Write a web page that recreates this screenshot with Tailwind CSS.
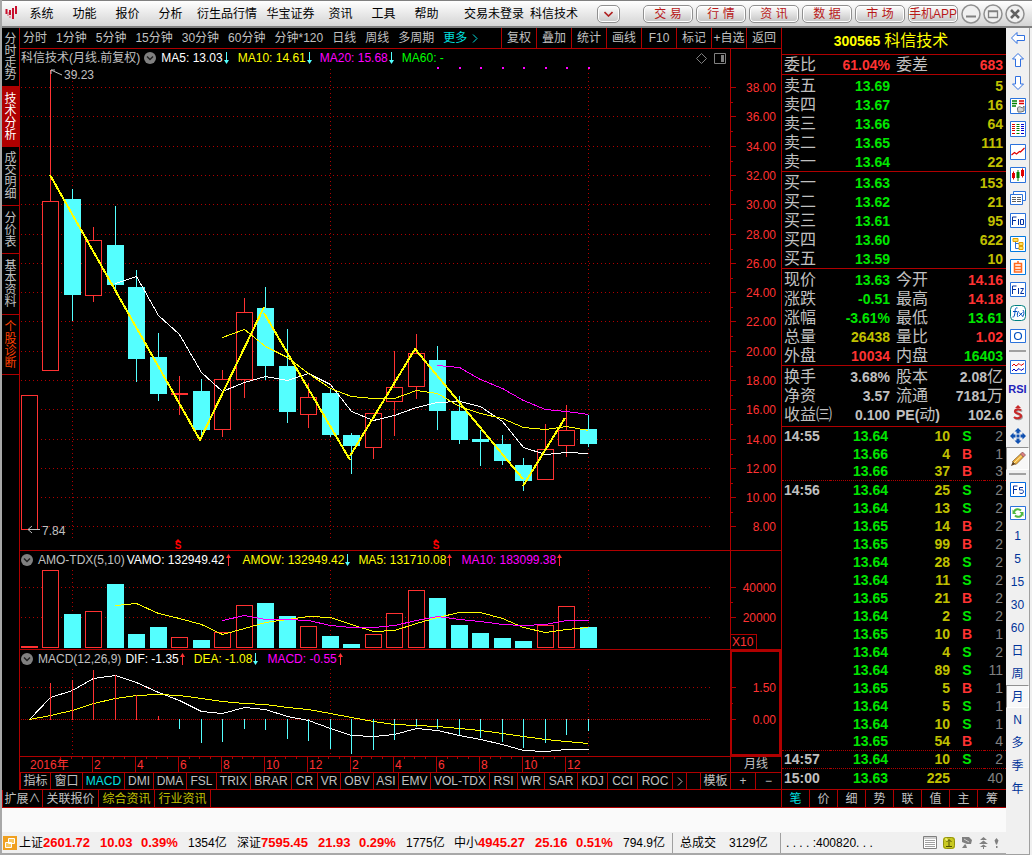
<!DOCTYPE html>
<html lang="zh-CN">
<head>
<meta charset="utf-8">
<title>科信技术 300565</title>
<script src="https://cdn.jsdelivr.net/npm/@tailwindcss/browser@4"></script>
</head>
<body class="flex min-h-screen flex-col border-l-2 border-[#a8a8a8] bg-[#f0f0f0] font-['Liberation_Sans','Noto_Sans_CJK_SC',sans-serif] text-xs text-black">

<!-- Title bar -->
<header class="flex h-7 items-center border-t border-b-2 border-t-[#808080] border-b-[#808080] bg-linear-to-b from-white to-[#d4d4d4] leading-4 whitespace-nowrap">
  <svg class="ml-[3px] shrink-0" width="13" height="15" viewBox="0 0 13 15" role="img" aria-label="华宝证券"><path d="M1.500 3v5M5 4v5M8 2v11M11 0v8" stroke="#c8102e" stroke-width="2" fill="none"/><path d="M3 6v4M5 10v2" stroke="#d86070" stroke-width="1" fill="none"/></svg>
  <nav class="ml-[2px] flex shrink-0">
    <button class="w-[43px]">系统</button><button class="w-[43px]">功能</button><button class="w-[43px]">报价</button><button class="w-[43px]">分析</button><button class="w-[70px]">衍生品行情</button><button class="w-[57px]">华宝证券</button><button class="w-[43px]">资讯</button><button class="w-[43px]">工具</button><button class="w-[43px]">帮助</button>
  </nav>
  <div class="ml-4 flex flex-1 gap-1.5"><span>交易未登录</span><span>科信技术</span></div>
  <button aria-label="展开" class="mr-[23px] flex h-[18px] w-[23px] shrink-0 items-center justify-center rounded-[5px] border border-[#909090] bg-linear-to-b from-white to-[#c8c8c8] shadow-[inset_0_0_0_1px_#fff]"><svg width="9" height="6" viewBox="0 0 9 6"><path d="M.5 1l4 4 4-4" fill="none" stroke="#b02020" stroke-width="1.600"/></svg></button>
  <div class="flex shrink-0 gap-[3px] leading-4 text-[#b81818]">
    <button class="h-[18px] w-[50px] rounded-[5px] border border-[#909090] bg-linear-to-b from-white to-[#c4c4c4] whitespace-pre shadow-[inset_0_0_0_1px_#fff]">交 易</button>
    <button class="h-[18px] w-[50px] rounded-[5px] border border-[#909090] bg-linear-to-b from-white to-[#c4c4c4] whitespace-pre shadow-[inset_0_0_0_1px_#fff]">行 情</button>
    <button class="h-[18px] w-[50px] rounded-[5px] border border-[#909090] bg-linear-to-b from-white to-[#c4c4c4] whitespace-pre shadow-[inset_0_0_0_1px_#fff]">资 讯</button>
    <button class="h-[18px] w-[50px] rounded-[5px] border border-[#909090] bg-linear-to-b from-white to-[#c4c4c4] whitespace-pre shadow-[inset_0_0_0_1px_#fff]">数 据</button>
    <button class="h-[18px] w-[50px] rounded-[5px] border border-[#909090] bg-linear-to-b from-white to-[#c4c4c4] whitespace-pre shadow-[inset_0_0_0_1px_#fff]">市 场</button>
    <button class="flex h-[18px] w-[50px] justify-center rounded-[5px] border border-[#909090] bg-linear-to-b from-white to-[#c4c4c4] shadow-[inset_0_0_0_1px_#fff]">手机APP</button>
  </div>
  <div class="mr-[7px] ml-[3px] flex shrink-0 gap-0.5">
    <button aria-label="最小化"><svg width="20" height="20" viewBox="0 0 20 20"><circle cx="10" cy="10" r="9" fill="#f0f0f0" stroke="#909090" stroke-width="1.500"/><path d="M5 12.500h10" stroke="#808080" stroke-width="2"/></svg></button>
    <button aria-label="最大化"><svg width="20" height="20" viewBox="0 0 20 20"><circle cx="10" cy="10" r="9" fill="#f0f0f0" stroke="#909090" stroke-width="1.500"/><path d="M5.500 7h9v6.500h-9zM5 7.500h10" fill="none" stroke="#808080" stroke-width="1.300"/></svg></button>
    <button aria-label="关闭"><svg width="20" height="20" viewBox="0 0 20 20"><circle cx="10" cy="10" r="9" fill="#f0f0f0" stroke="#909090" stroke-width="1.500"/><path d="M6 6l8 8M14 6l-8 8" stroke="#606060" stroke-width="2.600"/></svg></button>
  </div>
</header>

<div class="flex flex-1">
  <div class="flex min-w-0 flex-1 flex-col">
    <div class="flex bg-black text-[#c0c0c0]">
      <div class="flex min-w-0 flex-1 flex-col">
        <div class="flex flex-1">
          <!-- View tabs -->
          <nav class="flex w-[17px] shrink-0 flex-col text-xs leading-3">
            <button class="flex justify-center pt-[5px] pb-[5px]"><span class="w-3 break-all">分时走势</span></button>
            <button class="flex justify-center bg-[#b00000] pt-[7px] pb-[6px] text-white"><span class="w-3 break-all">技术分析</span></button>
            <button class="flex justify-center border-b border-[#b00000] pt-[5px] pb-[5px]"><span class="w-3 break-all">成交明细</span></button>
            <button class="flex justify-center border-b border-[#b00000] pt-[6px] pb-[5px]"><span class="w-3 break-all">分价表</span></button>
            <button class="flex justify-center border-b border-[#b00000] pt-[6px] pb-[6px]"><span class="w-3 break-all">基本资料</span></button>
            <button class="flex justify-center border-b border-[#b00000] pt-[6px] pb-[5px] text-[#ff4000]"><span class="w-3 break-all">个股诊断</span></button>
          </nav>

          <main class="min-w-0 flex-1 border-l border-[#b00000]">
            <!-- Period bar -->
            <div class="flex h-[21px] border-b border-[#b00000] whitespace-nowrap">
              <div class="flex flex-1 items-center gap-[9px] pl-[3px]">
                <button>分时</button><button>1分钟</button><button>5分钟</button><button>15分钟</button><button>30分钟</button><button>60分钟</button><button>分钟*120</button><button>日线</button><button>周线</button><button>多周期</button>
                <button class="flex items-center gap-[5px] text-[#00e0e0]">更多<svg width="6" height="9" viewBox="0 0 6 9"><path d="M1 .5l4 4-4 4" fill="none" stroke="#00e0e0"/></svg></button>
              </div>
              <button class="w-[35px] border-l border-[#b00000]">复权</button><button class="w-[35px] border-l border-[#b00000]">叠加</button><button class="w-[35px] border-l border-[#b00000]">统计</button><button class="w-[35px] border-l border-[#b00000]">画线</button><button class="w-[35px] border-l border-[#b00000]">F10</button><button class="w-[35px] border-l border-[#b00000]">标记</button><button class="flex w-[35px] items-center justify-center border-l border-[#b00000]">+自选</button><button class="w-[35px] border-l border-[#b00000]">返回</button>
            </div>

            <!-- Price pane -->
            <section class="flex border-b border-[#b00000]">
              <div class="min-w-0 flex-1">
                <div class="flex h-[18px] items-center pl-px whitespace-nowrap">
                  <span>科信技术(月线.前复权)</span>
                  <svg class="mr-[5px] ml-1" width="12" height="12" viewBox="0 0 12 12"><circle cx="6" cy="6" r="6" fill="#808080"/><path d="M3 4.500l3 3 3-3" fill="none" stroke="#202020" stroke-width="1.500"/></svg>
                  <span class="text-white">MA5: 13.03</span><svg class="mr-[9px] ml-px" width="5" height="12" viewBox="0 0 5 12"><path d="M2 0h1v9H2zM0 8h5L2.500 12z" fill="#54ffff"/></svg>
                  <span class="text-[#ffff00]">MA10: 14.61</span><svg class="mr-[8px] ml-px" width="5" height="12" viewBox="0 0 5 12"><path d="M2 0h1v9H2zM0 8h5L2.500 12z" fill="#54ffff"/></svg>
                  <span class="text-[#ff00ff]">MA20: 15.68</span><svg class="mr-[8px] ml-px" width="5" height="12" viewBox="0 0 5 12"><path d="M2 0h1v9H2zM0 8h5L2.500 12z" fill="#54ffff"/></svg>
                  <span class="flex-1 text-[#00ff00]">MA60: -</span>
                  <svg class="mr-[7px]" width="11" height="11" viewBox="0 0 11 11"><path d="M5.500.5l5 5-5 5-5-5z" fill="none" stroke="#808080"/></svg>
                  <svg class="mr-[4px]" width="12" height="11" viewBox="0 0 12 11"><path d="M.5.5h11v10H.5z" fill="none" stroke="#808080"/><path d="M7 2h3v7H7z" fill="#808080"/></svg>
                </div>
                <svg id="price" class="block h-[483px] w-full" role="img" aria-label="月线K线图"></svg>
              </div>
              <div class="w-[51px] border-l border-[#b00000] pt-[18px]"><svg id="priceAxis" class="block h-[483px] w-full"></svg></div>
            </section>

            <!-- Turnover pane -->
            <section class="flex border-b border-[#b00000]">
              <div class="min-w-0 flex-1">
                <div class="flex h-[17px] items-center pl-px whitespace-nowrap">
                  <svg class="mr-[5px]" width="12" height="12" viewBox="0 0 12 12"><circle cx="6" cy="6" r="6" fill="#808080"/><path d="M3 4.500l3 3 3-3" fill="none" stroke="#202020" stroke-width="1.500"/></svg>
                  <span class="mr-0.5">AMO-TDX(5,10)</span>
                  <span class="text-white">VAMO: 132949.42</span><svg class="mr-[12px] ml-px" width="5" height="12" viewBox="0 0 5 12"><path d="M2 12h1V3H2zM0 4h5L2.500 0z" fill="#ff3232"/></svg>
                  <span class="text-[#ffff00]">AMOW: 132949.42</span><svg class="mr-[8px] ml-px" width="5" height="12" viewBox="0 0 5 12"><path d="M2 0h1v9H2zM0 8h5L2.500 12z" fill="#54ffff"/></svg>
                  <span class="text-[#ffff00]">MA5: 131710.08</span><svg class="mr-[9px] ml-px" width="5" height="12" viewBox="0 0 5 12"><path d="M2 12h1V3H2zM0 4h5L2.500 0z" fill="#ff3232"/></svg>
                  <span class="text-[#ff00ff]">MA10: 183099.38</span><svg class="ml-px" width="5" height="12" viewBox="0 0 5 12"><path d="M2 12h1V3H2zM0 4h5L2.500 0z" fill="#ff3232"/></svg>
                </div>
                <svg id="amo" class="block h-[81px] w-full" role="img" aria-label="成交额"></svg>
              </div>
              <div class="flex w-[51px] flex-col border-l border-[#b00000] pt-[17px] text-[#ff3232]">
                <svg id="amoAxis" class="block h-[66px] w-full"></svg>
                <span class="h-[15px] w-[26px] border-t border-r border-[#b00000] pl-px leading-[14px]">X10</span>
              </div>
            </section>

            <!-- MACD pane -->
            <section class="flex border-b border-[#b00000]">
              <div class="min-w-0 flex-1">
                <div class="flex h-[17px] items-center pl-px whitespace-nowrap">
                  <svg class="mr-[5px]" width="12" height="12" viewBox="0 0 12 12"><circle cx="6" cy="6" r="6" fill="#808080"/><path d="M3 4.500l3 3 3-3" fill="none" stroke="#202020" stroke-width="1.500"/></svg>
                  <span class="mr-1">MACD(12,26,9)</span>
                  <span class="text-white">DIF: -1.35</span><svg class="mr-[9px] ml-px" width="5" height="12" viewBox="0 0 5 12"><path d="M2 12h1V3H2zM0 4h5L2.500 0z" fill="#ff3232"/></svg>
                  <span class="text-[#ffff00]">DEA: -1.08</span><svg class="mr-[9px] ml-px" width="5" height="12" viewBox="0 0 5 12"><path d="M2 0h1v9H2zM0 8h5L2.500 12z" fill="#54ffff"/></svg>
                  <span class="text-[#ff00ff]">MACD: -0.55</span><svg class="ml-px" width="5" height="12" viewBox="0 0 5 12"><path d="M2 12h1V3H2zM0 4h5L2.500 0z" fill="#ff3232"/></svg>
                </div>
                <svg id="macd" class="block h-[89px] w-full" role="img" aria-label="MACD"></svg>
              </div>
              <div class="w-[51px] border-2 border-[#b00000] pt-[15px]"><svg id="macdAxis" class="block h-[86px] w-full"></svg></div>
            </section>

            <!-- Time axis -->
            <div class="flex border-b border-[#b00000]">
              <svg id="timeAxis" class="block h-[15px] min-w-0 flex-1"></svg>
              <button class="h-[15px] w-[51px] border-l border-[#b00000] leading-[15px]">月线</button>
            </div>

            <!-- Indicator bar -->
            <div class="flex h-[17px] border-b border-l border-[#b00000] leading-4 whitespace-nowrap">
              <button class="w-[30px] border-r border-[#b00000]">指标</button><button class="w-8 border-r border-[#b00000]">窗口</button><button class="w-[42px] border-r border-[#b00000] text-[#00e0e0]">MACD</button><button class="w-[29px] border-r border-[#b00000]">DMI</button><button class="w-[33px] border-r border-[#b00000]">DMA</button><button class="w-[30px] border-r border-[#b00000]">FSL</button><button class="w-[34px] border-r border-[#b00000]">TRIX</button><button class="w-[41px] border-r border-[#b00000]">BRAR</button><button class="w-[26px] border-r border-[#b00000]">CR</button><button class="w-[23px] border-r border-[#b00000]">VR</button><button class="w-[33px] border-r border-[#b00000]">OBV</button><button class="w-[25px] border-r border-[#b00000]">ASI</button><button class="w-8 border-r border-[#b00000]">EMV</button><button class="w-[59px] border-r border-[#b00000]">VOL-TDX</button><button class="w-7 border-r border-[#b00000]">RSI</button><button class="w-[27px] border-r border-[#b00000]">WR</button><button class="w-[33px] border-r border-[#b00000]">SAR</button><button class="w-[30px] border-r border-[#b00000]">KDJ</button><button class="w-[30px] border-r border-[#b00000]">CCI</button><button class="w-[35px] border-r border-[#b00000]">ROC</button><button aria-label="更多指标" class="flex w-[14px] items-center justify-center border-r border-[#b00000]"><svg width="6" height="9" viewBox="0 0 6 9"><path d="M1 .5l4 4-4 4" fill="none" stroke="#c0c0c0"/></svg></button>
              <span class="flex-1"></span>
              <button class="w-[31px] border-r border-l border-[#b00000]">模板</button><button class="w-[25px] border-r border-[#b00000]">+</button><button class="w-[25px]">−</button>
            </div>
          </main>
        </div>

        <!-- Extension tabs -->
        <nav class="flex h-[18px] border-b border-l border-[#b00000] leading-[18px] whitespace-nowrap">
          <button class="w-10 border-r border-[#b00000]">扩展∧</button><button class="w-14 border-r border-[#b00000]">关联报价</button><button class="w-14 border-r border-[#b00000] text-[#c0c000]">综合资讯</button><button class="w-14 border-r border-[#b00000] text-[#c0c000]">行业资讯</button>
        </nav>
      </div>

      <!-- Quote panel -->
      <aside class="flex w-[225px] shrink-0 flex-col border-l border-[#b00000]">
        <h1 class="flex h-[27px] items-center justify-center gap-1 border-b border-[#b00000] pr-1.5 text-[#ffff00]"><span class="text-sm font-bold">300565</span><span class="text-base leading-5">科信技术</span></h1>
        <table class="w-full table-fixed border-separate border-spacing-0 text-base leading-[19px]">
          <colgroup><col class="w-[52px]"><col class="w-[56px]"><col class="w-[52px]"><col></colgroup>
          <tbody id="quotes"></tbody>
        </table>
        <table class="w-full table-fixed border-separate border-spacing-0 text-sm font-bold">
          <colgroup><col class="w-[48px]"><col class="w-[58px]"><col class="w-[62px]"><col class="w-[34px]"><col></colgroup>
          <tbody id="ticks"></tbody>
        </table>
        <nav class="mt-auto grid h-[19px] grid-cols-8 border-t border-b border-[#b00000] leading-[18px]">
          <button class="border-r border-[#b00000] text-[#00e0e0]">笔</button><button class="border-r border-[#b00000]">价</button><button class="border-r border-[#b00000]">细</button><button class="border-r border-[#b00000]">势</button><button class="border-r border-[#b00000]">联</button><button class="border-r border-[#b00000]">值</button><button class="border-r border-[#b00000]">主</button><button>筹</button>
        </nav>
      </aside>
    </div>

    <div class="h-6 bg-[#fafafa]"></div>

    <!-- Status bar -->
    <footer class="flex flex-1 items-center border-b-2 border-[#a8a8a8] leading-4 whitespace-nowrap">
      <svg class="mr-0.5 ml-px shrink-0" width="14" height="14" viewBox="0 0 14 14"><rect width="14" height="14" fill="#f0a020"/><path d="M5.500 2.500h6v5h-6zM2.500 6.500h6v5h-6z" fill="#f8c860" stroke="#fff"/></svg>
      <div class="flex w-[218px]"><span class="w-6">上证</span><b class="w-[57px] text-[13px] text-[#ff0000]">2601.72</b><b class="w-[41px] text-[13px] text-[#ff0000]">10.03</b><b class="w-[47px] text-[13px] text-[#ff0000]">0.39%</b><span>1354亿</span></div>
      <div class="flex w-[217px]"><span class="w-6">深证</span><b class="w-[57px] text-[13px] text-[#ff0000]">7595.45</b><b class="w-[41px] text-[13px] text-[#ff0000]">21.93</b><b class="w-[47px] text-[13px] text-[#ff0000]">0.29%</b><span>1775亿</span></div>
      <div class="flex w-[218px]"><span class="w-6">中小</span><b class="w-[57px] text-[13px] text-[#ff0000]">4945.27</b><b class="w-[41px] text-[13px] text-[#ff0000]">25.16</b><b class="w-[47px] text-[13px] text-[#ff0000]">0.51%</b><span>794.9亿</span></div>
      <div class="flex h-5 w-[109px] items-center gap-[13px] border-r border-l border-[#a0a0a0] pl-[7px]"><span>总成交</span><span>3129亿</span></div>
      <span class="flex-1 pl-[5px]">. . . . :400820. . .</span>
      <div class="mr-[7px] flex items-center gap-[6px]">
        <svg width="14" height="13" viewBox="0 0 14 13"><path d="M.5.5h13v12H.5z" fill="#fff" stroke="#808080"/><path d="M1 2h12M2 4.500h10M2 6.500h10M2 8.500h10M2 10.500h10" stroke="#a0a0a0"/></svg>
        <svg width="12" height="12" viewBox="0 0 12 12"><rect width="12" height="12" rx="3" fill="#c8c820"/><rect x=".5" y=".5" width="11" height="11" rx="3" fill="none" stroke="#909010"/><path d="M3.500 5L6 2.500 8.500 5M6 3v6M3 9.500h6" fill="none" stroke="#505000"/><path d="M2 2h2v2" stroke="#ffff90" fill="none"/></svg>
        <svg width="12" height="13" viewBox="0 0 12 13"><path d="M1 1h7l3 3-1 4H6L1 6zM4 8l-3 4h5l-1-3z" fill="#808080"/><path d="M3 3l5 3" stroke="#d0d0d0"/></svg>
        <svg width="9" height="12" viewBox="0 0 9 12"><path d="M4.500 0L8 3H1zM4.500 3.500L9 7H0zM4.500 7.500L8 10H1zM4 9h1v3H4z" fill="#808080"/></svg>
        <svg width="5" height="12" viewBox="0 0 5 12"><path d="M2.500 1L4.500 3.500 3 7.500H2L.5 3.500zM2 9h1.500v2H2z" fill="#808080"/></svg>
      </div>
    </footer>
  </div>

  <!-- Tool strip -->
  <aside class="mr-0.5 flex w-6 shrink-0 flex-col border-r border-b border-[#a0a0a0] text-xs text-[#003399]">
    <button aria-label="后退" class="flex h-5 items-center justify-center"><svg width="16" height="14" viewBox="0 0 16 14"><path d="M1.500 7L7 1.500V4.500h7.500v5H7v3z" fill="#fff" stroke="#3070e0"/></svg></button>
    <button aria-label="上一只" class="flex h-[23px] items-center justify-center"><svg width="14" height="16" viewBox="0 0 14 16"><path d="M7 1.500L12.500 7H9.500v7.500h-5V7h-3z" fill="#fff" stroke="#3070e0"/></svg></button>
    <button aria-label="下一只" class="flex h-[23px] items-center justify-center"><svg width="14" height="16" viewBox="0 0 14 16"><path d="M7 14.500L12.500 9H9.500V1.500h-5V9h-3z" fill="#fff" stroke="#3070e0"/></svg></button>
    <button aria-label="自选设置" class="flex h-[23px] items-center justify-center"><svg width="16" height="16" viewBox="0 0 16 16"><path d="M.5.5h15v15H.5z" fill="#fff" stroke="#2a72dc"/><path d="M2 3h5M2 5.500h5M2 8h4" stroke="#008000" stroke-width="1.500"/><path d="M9 3h5M9 5.500h5" stroke="#e00000" stroke-width="1.500"/><path d="M7.500 11a2 2 0 0 1 3-2l2 1 1.500-2v5l-3 1H8z" fill="#d0d0d0" stroke="#707070"/></svg></button>
    <button aria-label="行情报价" class="flex h-[23px] items-center justify-center"><svg width="16" height="16" viewBox="0 0 16 16"><path d="M.5.5h15v15H.5z" fill="#fff" stroke="#2a72dc"/><path d="M2 3.500h3M2 5.500h3M2 7.500h3M2 9.500h3M2 12.500h3" stroke="#e00000"/><path d="M6.500 3.500h3M6.500 5.500h3M6.500 7.500h3M6.500 9.500h3M6.500 12.500h3" stroke="#008000"/><path d="M11 3.500h3M11 5.500h3M11 7.500h3M11 9.500h3M11 12.500h3" stroke="#0000d0"/></svg></button>
    <button aria-label="分时图" class="flex h-[23px] items-center justify-center"><svg width="16" height="16" viewBox="0 0 16 16"><path d="M.5.5h15v15H.5z" fill="#fff" stroke="#2a72dc"/><path d="M1.500 11l3-2.500 2 1.500 3-2.500 1 .5 4-4" fill="none" stroke="#e00000" stroke-width="1.200"/></svg></button>
    <button aria-label="K线图" class="flex h-[23px] items-center justify-center"><svg width="16" height="16" viewBox="0 0 16 16"><path d="M.5.5h15v15H.5z" fill="#fff" stroke="#2a72dc"/><path d="M2 6h3v5H2zM3 4.500h1v8H3zM11 3h3v6h-3zM12 1.500h1v9h-1z" fill="#e00000"/><path d="M6.500 5h3v6h-3zM7.500 3h1v11h-1z" fill="#008000"/></svg></button>
    <button aria-label="多窗口" class="flex h-[23px] items-center justify-center"><svg width="16" height="16" viewBox="0 0 16 16"><path d="M3.500 1.500h12v9h-12z" fill="#fff" stroke="#2a72dc"/><path d="M.5 4.500h12v10H.5z" fill="#fff" stroke="#2a72dc"/><path d="M2 7.500h4M7 7.500h4M2 9.500h4M7 9.500h4M2 11.500h4M7 11.500h4" stroke="#606060"/></svg></button>
    <button aria-label="F10资料" class="flex h-[23px] items-center justify-center"><svg width="16" height="15" viewBox="0 0 16 15"><path d="M.5.5h15v14H.5z" fill="#fff" stroke="#2a72dc"/><path d="M2.500 12V4h4M2.500 7.500h3.500M8.500 6v6M10.500 6.500h3v5h-3z" fill="none" stroke="#0030a0"/></svg></button>
    <button aria-label="板块树" class="flex h-[23px] items-center justify-center"><svg width="16" height="16" viewBox="0 0 16 16"><path d="M.5.5h15v15H.5z" fill="#fff" stroke="#0078e0"/><path d="M5.500 5v7.500H9M5.500 7.500H9" fill="none" stroke="#2a72dc"/><path d="M3 2.500h5v3H3zM9 6.500h4v3H9zM9 10.500h4v3H9z" fill="#ffe060" stroke="#e0a000"/></svg></button>
    <button aria-label="自选股" class="flex h-[23px] items-center justify-center"><svg width="16" height="16" viewBox="0 0 16 16"><path d="M.5.5h15v15H.5z" fill="#fff" stroke="#0078e0"/><path d="M8 2v2M4.500 4.500h7v8.500h-7zM4.500 7.500h7M4.500 10.500h7" fill="none" stroke="#ff6a20" stroke-width="1.500"/></svg></button>
    <button aria-label="分类资讯" class="flex h-[23px] items-center justify-center"><svg width="16" height="15" viewBox="0 0 16 15"><path d="M.5.5h15v14H.5z" fill="#fff" stroke="#2a72dc"/><path d="M2.500 12V4h4M2.500 7.500h3.500M8.500 6v6M10.500 6.500h3l-3 5h3.500" fill="none" stroke="#0030a0"/></svg></button>
    <button aria-label="公式管理" class="flex h-[23px] items-center justify-center"><svg width="16" height="16" viewBox="0 0 16 16"><rect x=".5" y=".5" width="15" height="15" rx="4" fill="#fff" stroke="#008080"/><path d="M7.500 3c-3-1-2 3-3 7-.3 2-1 2-2 2M3 6.500h4M8.500 6c-1.500 2-1.500 4-.5 6M13 5c1.500 2 1 5-.5 7M9 7.500l3.500 3.500M12.500 7.500L9 11" fill="none" stroke="#0050c0"/></svg></button>
    <button aria-label="圈图" class="flex h-[23px] items-center justify-center"><svg width="16" height="14" viewBox="0 0 16 14"><path d="M.5.5h15v13H.5z" fill="#fff" stroke="#2a72dc"/><circle cx="8" cy="7" r="3.500" fill="none" stroke="#0050c0" stroke-width="1.200"/></svg></button>
    <hr class="mx-[3px] my-[3px] border-t-2 border-[#a0a0a0]">
    <button aria-label="叠加走势" class="flex h-[23px] items-center justify-center"><svg width="16" height="14" viewBox="0 0 16 14"><path d="M.5.5h15v13H.5z" fill="#fff" stroke="#2a72dc"/><path d="M2 6l2-2 2 2 3-2.500 2 2 3-2" fill="none" stroke="#e00000"/><path d="M2 11l2-2 2 2 3-2.500 2 2 3-2" fill="none" stroke="#0000c0"/></svg></button>
    <button class="h-[23px] text-center text-[11px] font-bold text-[#2222bb]">RSI</button>
    <button aria-label="交易" class="flex h-[23px] items-center justify-center"><svg width="12" height="16" viewBox="0 0 12 16"><path d="M9 5.500C7.500 3.500 3 4 3 6.500S9 8 9 10.800 4 14 2 12" transform="translate(1,1)" fill="none" stroke="#a0a0a0" stroke-width="2"/><path d="M9 5.500C7.500 3.500 3 4 3 6.500S9 8 9 10.800 4 14 2 12" fill="none" stroke="#c82828" stroke-width="2.200"/><path d="M3 3L6 0l3 3z" fill="#c82828"/></svg></button>
    <button aria-label="移动" class="flex h-[23px] items-center justify-center"><svg width="16" height="16" viewBox="0 0 16 16"><path d="M8 0l3.500 3.500H9.500v2h-3v-2h-2zM8 16l3.500-3.500H9.500v-2h-3v2h-2zM0 8l3.500-3.500V6.500h2v3h-2v2zM16 8l-3.500-3.500V6.500h-2v3h2v2zM6.500 6.500h3v3h-3z" fill="#1050b0"/></svg></button>
    <button aria-label="画线工具" class="flex h-[23px] items-center justify-center border border-t-[#909090] border-r-white border-b-white border-l-[#909090] bg-[#f8f8f8]"><svg width="16" height="16" viewBox="0 0 16 16"><path d="M1 15l2-5 3 3z" fill="#604020"/><path d="M2.500 10.500L10.500 3l3 3L6 13.500z" fill="#f0b040" stroke="#705020" stroke-width=".7"/><path d="M4 12l8-7.500" stroke="#fff0a0"/><path d="M10.500 3l2-2 3 3-2 2z" fill="#e08080" stroke="#805050" stroke-width=".7"/></svg></button>
    <hr class="mx-[3px] my-[3px] border-t-2 border-[#a0a0a0]">
    <button aria-label="F5切换" class="flex h-[23px] items-center justify-center"><svg width="16" height="15" viewBox="0 0 16 15"><path d="M.5.5h15v14H.5z" fill="#fff" stroke="#0068e0"/><path d="M3.500 12V4h4M3.500 7.500h3.500M13 5.500H9.500v2.500c3.500-.5 4 .5 4 1.500 0 2-2 2.500-4 1.500" fill="none" stroke="#0030a0"/></svg></button>
    <button aria-label="刷新" class="flex h-[23px] items-center justify-center"><svg width="16" height="14" viewBox="0 0 16 14"><path d="M.5.5h15v13H.5z" fill="#fff" stroke="#2a72dc"/><path d="M4 6c1-3.500 5-3.500 7-1.500M12 8c-1 3.500-5 3.500-7 1.500" fill="none" stroke="#50b840" stroke-width="2"/><path d="M2.500 3.500v4.500h4zM13.500 10.500V6h-4z" fill="#50b840"/></svg></button>
    <button class="h-[23px]">1</button><button class="h-[23px]">5</button><button class="h-[23px]">15</button><button class="h-[23px]">30</button><button class="h-[23px]">60</button><button class="h-[23px]">日</button><button class="h-[23px]">周</button>
    <button class="h-[23px] border border-t-[#909090] border-r-white border-b-white border-l-[#909090] bg-[#f8f8f8]">月</button>
    <button class="h-[23px]">N</button><button class="h-[23px]">多</button><button class="h-[23px]">季</button><button class="h-[23px]">年</button>
  </aside>
</div>

<script>
const RED = '#ff3232', LINE = '#b00000', CYAN = '#54ffff', YEL = '#ffff00', WHITE = '#ffffff', MAG = '#ff00ff';
const left = i => 21 + Math.floor(21.5 * i);
const mid = i => left(i) + 8;

const box = (x, y, w, h, fill) => `<rect x="${x}" y="${y}" width="${w}" height="${h}" fill="${fill}" shape-rendering="crispEdges"/>`;
const frame = (x, y, h) => `<rect x="${x + 0.5}" y="${y + 0.5}" width="16" height="${h - 1}" fill="#000" stroke="${RED}" shape-rendering="crispEdges"/>`;
const hdots = (y, gap) => `<line x1="21" y1="${y + 0.5}" x2="100%" y2="${y + 0.5}" stroke="${LINE}" stroke-dasharray="1 ${gap}" shape-rendering="crispEdges"/>`;
const vdots = (a, b) => [72, 330, 588].map(x => `<line x1="${x + 0.5}" y1="${a}" x2="${x + 0.5}" y2="${b}" stroke="${LINE}" stroke-dasharray="1 3" shape-rendering="crispEdges"/>`).join('');
const poly = (pts, color, w) => `<polyline points="${pts.map(p => p.join(',')).join(' ')}" fill="none" stroke="${color}" stroke-width="${w}" shape-rendering="crispEdges"/>`;
const series = (from, ys, color) => poly(ys.map((y, k) => [mid(from + k) + 0.5, y + 0.5]), color, 1);
const put = (id, dx, dy, html) => { document.getElementById(id).innerHTML = `<g transform="translate(${-dx},${-dy})">${html}</g>`; };

// rows: up candle (1) or down candle (0), body top, body bottom, high, low
const candles = [
  [1,395,530,395,530],[1,201,371,70,371],[0,199,295,189,321],[1,240,296,227,302],[0,245,285,206,291],
  [0,287,359,270,382],[0,357,394,333,401],[1,393,395,376,415],[0,391,430,379,435],[1,379,430,370,437],
  [1,312,380,298,398],[0,308,366,287,380],[0,366,412,329,423],[1,397,415,383,428],[0,393,435,389,437],
  [0,435,446,433,474],[1,413,448,413,459],[1,387,402,351,436],[1,353,387,334,399],[0,360,411,346,430],
  [0,411,440,396,444],[0,439,442,430,466],[0,444,461,435,465],[0,465,481,458,491],[1,449,480,424,480],
  [1,430,446,405,457],[0,429,444,415,447]];
const priceY = [87,116,146,175,204,234,263,292,321,351,380,409,439,468,497,526];

let g = priceY.map(y => hdots(y, 3)).join('') + vdots(69, 538);
candles.forEach(([up, a, b, hi, lo], i) => {
  g += box(mid(i), hi, 1, lo - hi, up ? RED : CYAN);
  g += up && b - a > 3 ? frame(left(i), a, b - a) : box(left(i), a, 17, b - a, up ? RED : CYAN);
});
g += series(4, [283,276,315,334,372,391,382,376,380,373,384,411,420,415,407,402,401,406,421,447,454,452,453], WHITE);
g += series(9, [337,329,346,357,373,388,396,398,398,390,393,406,413,418,427,429,426,430], YEL);
g += series(19, [365,367,379,388,400,409,411,414], MAG);
g += poly([[50,175],[200,440],[264,307]], YEL, 2) + poly([[264,313],[350,460]], YEL, 2) + poly([[350,456],[415,349],[523,479]], YEL, 2) + poly([[523,486],[565,418]], YEL, 2);
for (let i = 19; i < 27; i++) g += box(mid(i), 67, 2, 2, MAG);
g += '<path d="M62 75l-11-5M51 74v-4h4M40 529.500H28M32 526l-4 3.500 4 3.500" fill="none" stroke="#c0c0c0"/>';
g += '<g font-size="12" fill="#c0c0c0"><text x="64" y="79">39.23</text><text x="42" y="535">7.84</text></g>';
[178, 436].forEach(x => { g += `<text x="${x}" y="549" font-size="10" font-weight="bold" text-anchor="middle" fill="#ff0000">S</text><path d="M${x - 3} 542l3-3 3 3z" fill="#ff0000"/>`; });
put('price', 20, 67, g);
put('priceAxis', 731, 67, priceY.map((y, k) => box(731, y, 5, 1, LINE) + (k ? box(731, Math.round((y + priceY[k - 1]) / 2), 2, 1, LINE) : '') + `<text x="776" y="${y + 5}" font-size="12" text-anchor="end" fill="${RED}">${38 - 2 * k}.00</text>`).join(''));

// turnover bars: up flag, top edge
const amo = [[1,646],[1,570],[0,614],[1,611],[0,584],[0,634],[0,627],[1,637],[0,640],[1,632],[1,605],[0,603],[0,616],[1,626],[0,636],[0,644],[1,634],[1,613],[1,590],[0,598],[0,625],[0,633],[0,638],[0,641],[1,625],[1,606],[0,627]];
g = hdots(587, 3) + hdots(617, 3) + vdots(570, 648);
amo.forEach(([up, y], i) => { g += up && i ? frame(left(i), y, 648 - y) : box(left(i), y, 17, 648 - y, up ? RED : CYAN); });
g += series(4, [605,603,613,618,624,634,628,622,619,616,617,624,631,630,623,617,612,612,618,627,632,629,627], YEL);
g += series(9, [620,615,619,619,620,625,627,627,625,620,616,619,621,624,625,624,620,620], MAG);
put('amo', 20, 568, g);
put('amoAxis', 731, 568, [[587,'40000'],[617,'20000']].map(([y, t]) => box(731, y, 5, 1, LINE) + `<text x="776" y="${y + 5}" font-size="12" text-anchor="end" fill="${RED}">${t}</text>`).join('') + box(731, 602, 2, 1, LINE));

const macd = [null,683,680,670,675,695,716,729,743,742,729,730,739,741,749,754,750,740,727,729,735,738,742,748,743,735,731];
g = hdots(687, 3) + hdots(719, 1) + vdots(669, 755);
g += series(0, [719,697,690,678,675,682,692,700,711,713,707,709,716,720,728,735,736,734,728,730,735,739,744,750,751,749,749], WHITE);
g += series(0, [719,715,710,703,698,695,694,695,698,701,703,704,707,709,713,717,721,724,725,726,728,730,733,736,739,741,743], YEL);
macd.forEach((y, i) => { if (y) g += y < 719 ? box(mid(i), y, 1, 720 - y, RED) : box(mid(i), 719, 1, y - 719, CYAN); });
put('macd', 20, 667, g);
put('macdAxis', 732, 667, [[687,'1.50'],[719,'0.00']].map(([y, t]) => box(732, y, 4, 1, LINE) + `<text x="776" y="${y + 5}" font-size="12" text-anchor="end" fill="${RED}">${t}</text>`).join('') + box(732, 703, 1, 1, LINE));

g = `<text x="30" y="769" font-size="12" fill="${RED}">2016年</text>`;
[60, 71, 82].forEach(x => g += box(x, 757, 1, 2, LINE));
[2,4,6,8,10,12,2,4,6,8,10,12].forEach((m, k) => {
  const x = 92 + 43 * k;
  g += box(x, 757, 1, 15, LINE) + `<text x="${x + 2}" y="769" font-size="12" fill="${RED}">${m}</text>`;
  if (k < 11) [11, 21, 32].forEach(d => g += box(x + d, 757, 1, 2, LINE));
});
put('timeAxis', 20, 757, g);

const tone = { r: 'text-[#ff3232]', g: 'text-[#00e600]', y: 'text-[#c0c000]', w: 'text-[#c0c0c0]', d: 'text-[#808080]' };
const blocks = [
  [['委比','61.04%','r','委差','683','r']],
  [['卖五','13.69','g','','5','y'],['卖四','13.67','g','','16','y'],['卖三','13.66','g','','64','y'],['卖二','13.65','g','','111','y'],['卖一','13.64','g','','22','y']],
  [['买一','13.63','g','','153','y'],['买二','13.62','g','','21','y'],['买三','13.61','g','','95','y'],['买四','13.60','g','','622','y'],['买五','13.59','g','','10','y']],
  [['现价','13.63','g','今开','14.16','r'],['涨跌','-0.51','g','最高','14.18','r'],['涨幅','-3.61%','g','最低','13.61','g'],['总量','26438','y','量比','1.02','r'],['外盘','10034','r','内盘','16403','g']],
  [['换手','3.68%','w','股本','2.08<span class="text-base leading-[18px] font-normal">亿</span>','w'],['净资','3.57','w','流通','7181<span class="text-base leading-[18px] font-normal">万</span>','w'],['收益㈢','0.100','w','<b class="text-sm leading-[18px]">PE(</b>动<b class="text-sm leading-[18px]">)</b>','102.6','w']]];
document.getElementById('quotes').innerHTML = blocks.map((rows, bi) => rows.map(([a, b, c, d, e, f], k) => {
  const first = k === 0 && bi > 0, last = k === rows.length - 1;
  const cell = 'p-0 align-top ' + (last ? 'border-b border-[#b00000] ' : '') + (first ? 'pt-px ' : '') + (last && bi === 4 ? 'pb-0.5' : '');
  return `<tr><th class="${cell}"><div class="flex h-[19px] items-center pl-0.5 leading-[18px] font-normal whitespace-nowrap">${a}</div></th><td class="${cell}"><div class="flex h-[19px] items-center justify-end text-sm leading-[18px] font-bold ${tone[c]}">${b}</div></td><th class="${cell}"><div class="flex h-[19px] items-center pl-1.5 leading-[18px] font-normal whitespace-nowrap">${d}</div></th><td class="${cell}"><div class="flex h-[19px] items-center justify-end pr-[3px] text-sm leading-[18px] font-bold ${tone[f]}">${e}</div></td></tr>`;
}).join('')).join('');

const ticks = `14:55 13.64 10 S 2
- 13.66 4 B 1
- 13.66 37 B 3
14:56 13.64 25 S 2
- 13.64 13 S 2
- 13.65 14 B 2
- 13.65 99 B 2
- 13.64 28 S 2
- 13.64 11 S 2
- 13.65 21 B 2
- 13.64 2 S 2
- 13.65 10 B 1
- 13.64 4 S 2
- 13.64 89 S 11
- 13.65 5 B 1
- 13.64 5 S 1
- 13.64 10 S 1
- 13.65 54 B 4
14:57 13.64 10 S 2
15:00 13.63 225 - 40`.split('\n').map(r => r.split(' '));
document.getElementById('ticks').innerHTML = ticks.map(([t, p, v, s, n], k) => {
  const sep = ticks[k + 1] && ticks[k + 1][0] !== '-';
  const cell = sep ? 'h-[18px] leading-[17px] border-b border-dotted border-[#b00000]' : 'h-[18px] leading-[18px]';
  return `<tr><td class="${cell} pl-0.5">${t === '-' ? '' : t}</td><td class="${cell} text-right ${tone.g}">${p}</td><td class="${cell} text-right ${tone.y}">${v}</td><td class="${cell} text-center ${s === 'B' ? tone.r : tone.g}">${s === '-' ? '' : s}</td><td class="${cell} pr-[3px] text-right font-normal ${tone.d}">${n}</td></tr>`;
}).join('');
</script>
</body>
</html>
